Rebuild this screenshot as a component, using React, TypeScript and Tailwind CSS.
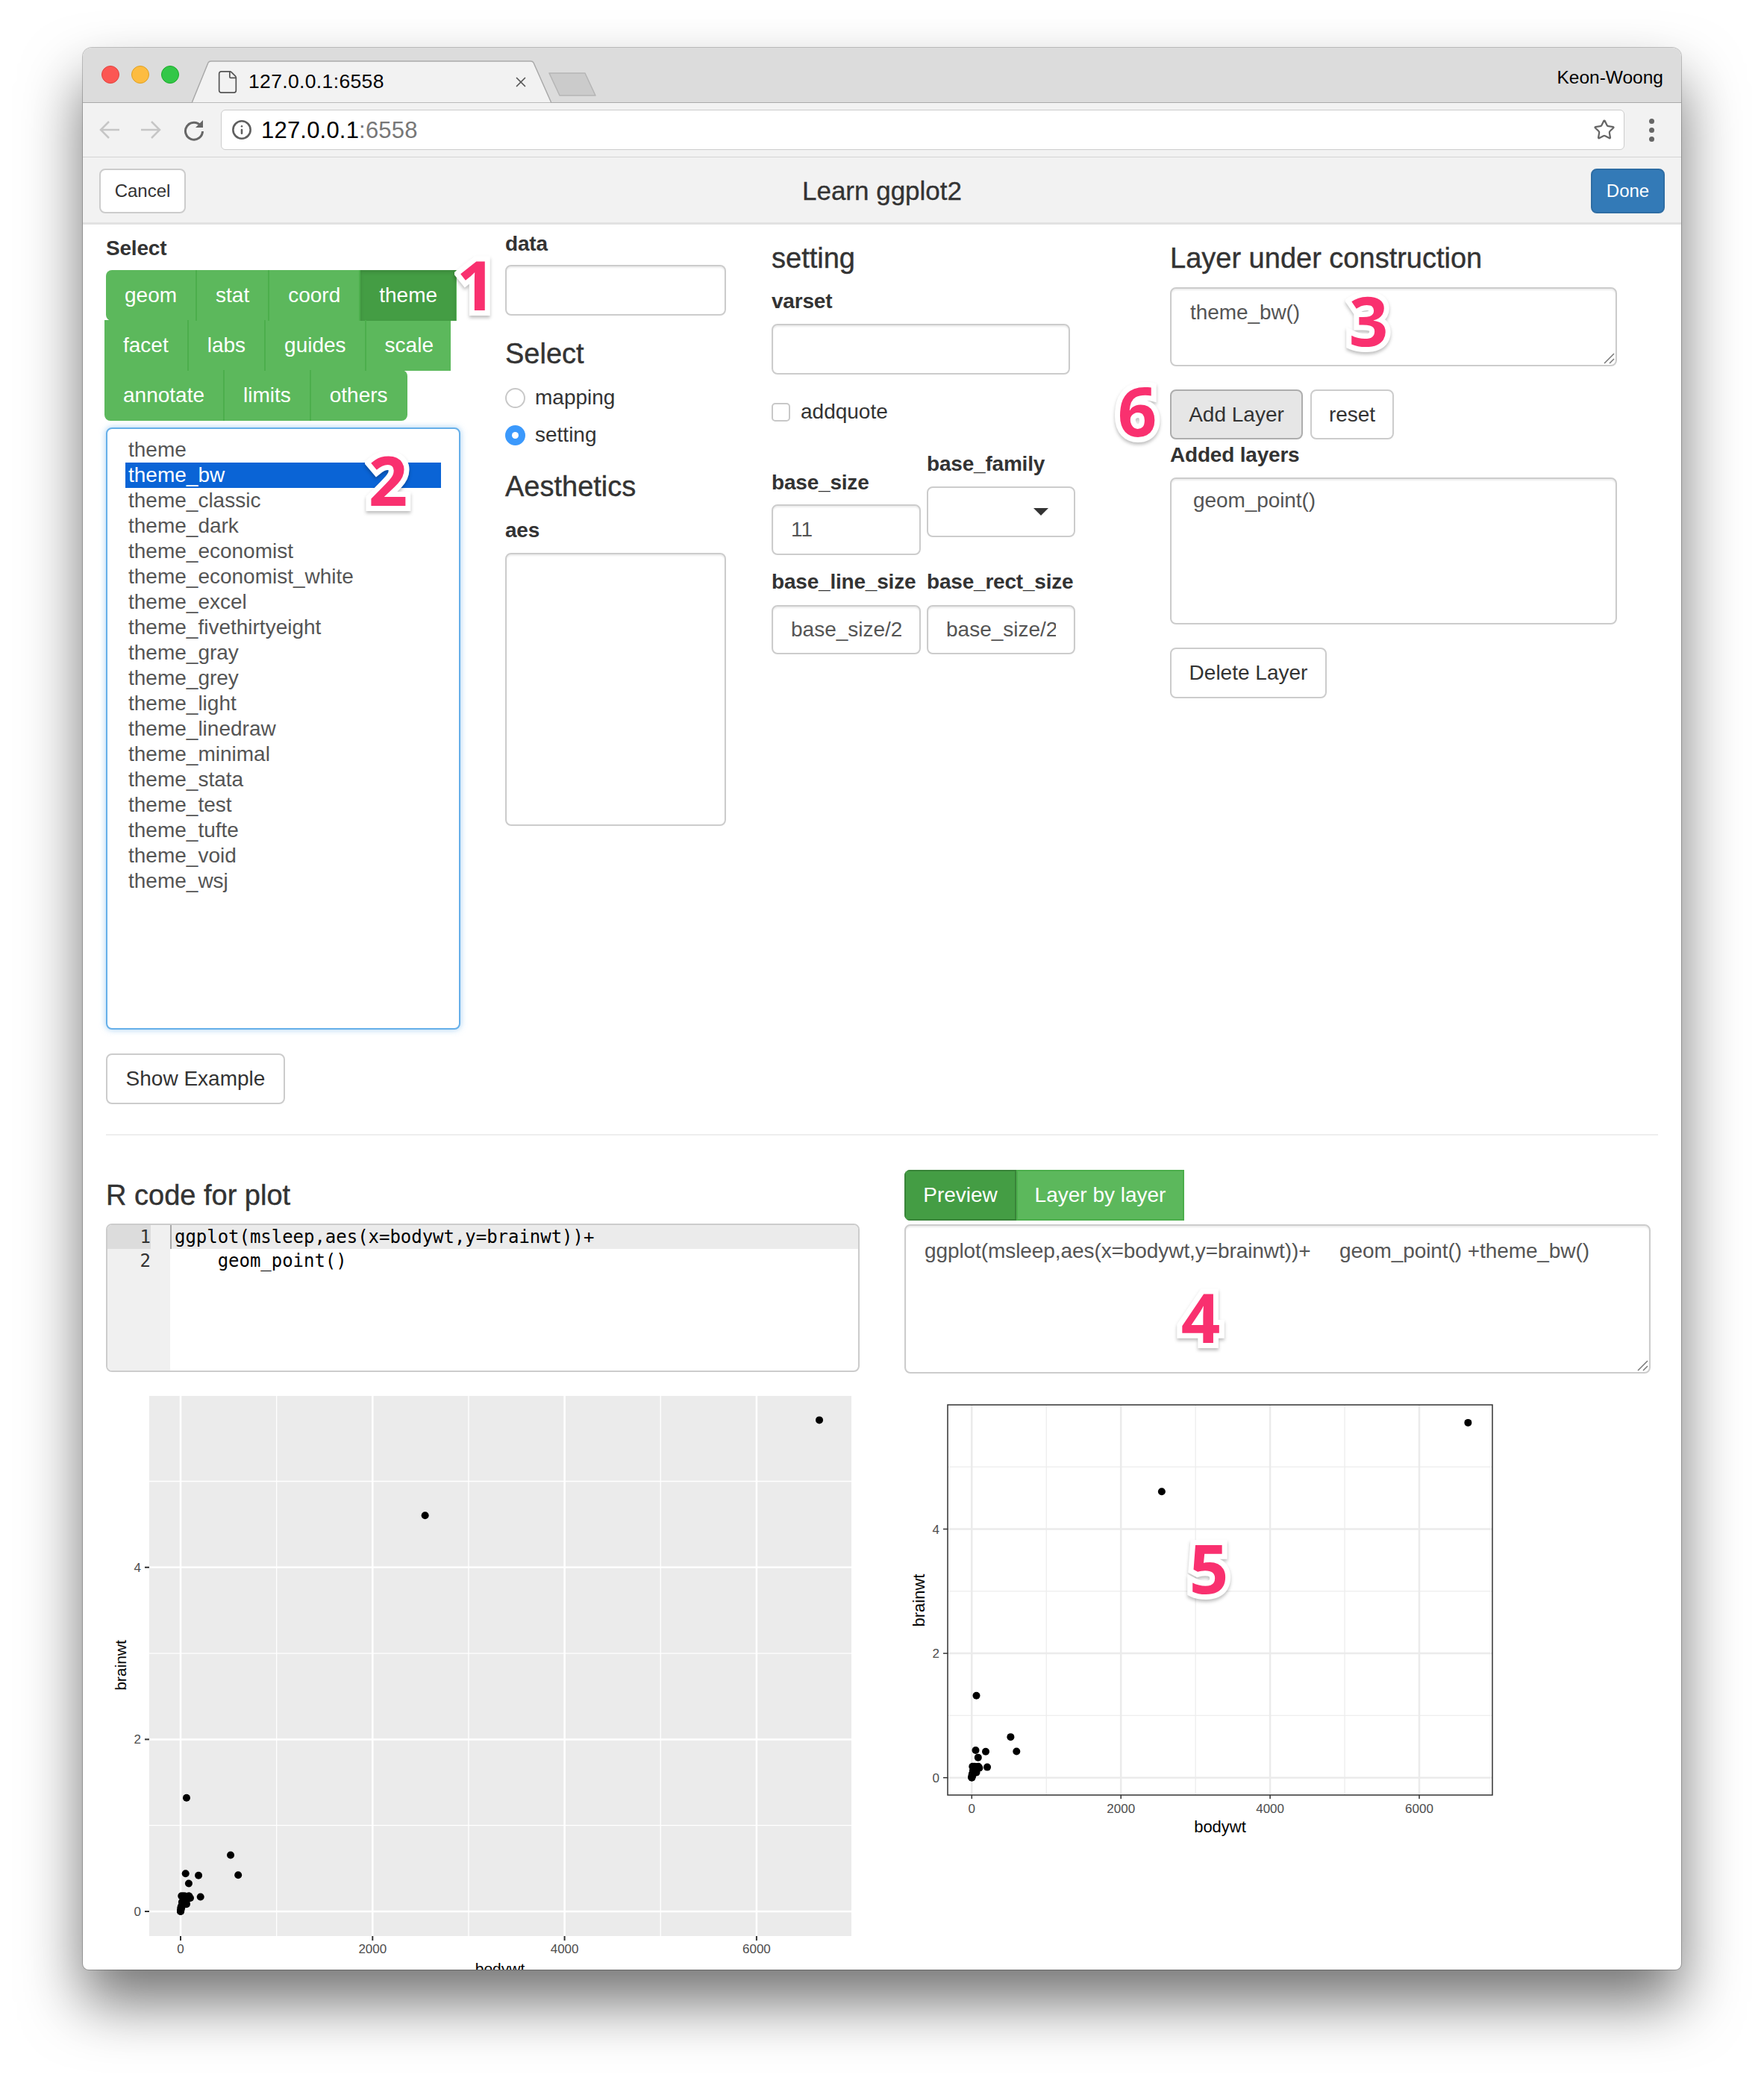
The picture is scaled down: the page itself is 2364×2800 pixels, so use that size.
import { File, Info, Star, X } from 'lucide-react';

const list = [
  'theme', 'theme_bw', 'theme_classic', 'theme_dark', 'theme_economist', 'theme_economist_white',
  'theme_excel', 'theme_fivethirtyeight', 'theme_gray', 'theme_grey', 'theme_light', 'theme_linedraw',
  'theme_minimal', 'theme_stata', 'theme_test', 'theme_tufte', 'theme_void', 'theme_wsj',
];

// msleep bodywt / brainwt
const points: [number, number][] = [
  [6654, 5.712], [2547, 4.603], [521, 0.655], [600, 0.423], [62, 1.32], [52.2, 0.44], [187, 0.419],
  [85, 0.325], [207.5, 0.169], [88, 0.179], [101, 0.156], [55.5, 0.175], [27.66, 0.115],
  [36, 0.179], [10, 0.179], [15.5, 0.11], [62, 0.084], [23, 0.075], [10, 0.046], [14, 0.07], [36.3, 0.119],
  [33.5, 0.115], [60, 0.12], [3.5, 0.0456], [4.75, 0.0394], [20.5, 0.1], [1, 0.0055], [0.5, 0.003], [0.1, 0.001],
  [2, 0.012], [5, 0.03], [8, 0.06], [45, 0.14],
];

const inputCls =
  'block rounded-lg border-2 border-[#ccc] bg-white px-[24px] text-[28px] text-[#555] shadow-[inset_0_2px_2px_rgba(0,0,0,0.075)] outline-none';
const btnCls = 'flex items-center justify-center rounded-lg border-2 text-[28px] text-[#333]';
const labelCls = 'h-[34px] text-[28px] font-bold leading-[34px] tracking-[-0.2px] text-[#333]';
const headCls = 'h-[44px] text-[38px] leading-[44px] text-[#333] [-webkit-text-stroke:0.4px_#333]';

function GreenRow({ items, className }: { items: string[]; className: string }) {
  return (
    <div className={`flex h-[68px] overflow-hidden bg-[#5cb85c] ${className}`}>
      {items.map((t) => (
        <div
          key={t}
          className={`flex items-center border-r-2 border-[#4cae4c] px-[25px] text-[28px] text-white last:border-r-0 ${
            t === 'theme' ? 'bg-[#449d44] shadow-[inset_0_3px_5px_rgba(0,0,0,0.125)]' : ''
          }`}
        >
          {t}
        </div>
      ))}
    </div>
  );
}

function Area({ text, grip, className }: { text?: string; grip?: boolean; className: string }) {
  return (
    <div className={`relative ${className}`}>
      <textarea
        readOnly
        defaultValue={text}
        className="block h-full w-full resize-none overflow-hidden rounded-lg border-2 border-[#ccc] bg-white px-[26px] py-[10px] text-[28px] leading-[40px] tracking-[-0.08px] text-[#555] shadow-[inset_0_2px_2px_rgba(0,0,0,0.075)] outline-none"
      />
      {grip && (
        <svg className="absolute right-[3px] bottom-[3px] h-[16px] w-[16px]" viewBox="0 0 16 16">
          <path d="M2 15L15 2M9 15L15 9" stroke="#777" strokeWidth="1.5" />
        </svg>
      )}
    </div>
  );
}

function Marker({ n, className }: { n: string; className: string }) {
  return (
    <span
      className={`absolute -translate-x-1/2 -translate-y-1/2 font-['Open_Sans',sans-serif] text-[92px] leading-none font-bold text-[#f9306f] drop-shadow-[0_3px_2px_rgba(0,0,0,0.25)] [-webkit-text-stroke:14px_white] [paint-order:stroke_fill] ${className}`}
    >
      {n}
    </span>
  );
}

function LeftPlot() {
  const px = (x: number) => 242 + x * 0.12865;
  const py = (y: number) => 2562 - y * 115.3;
  return (
    <svg className="mt-[21px] block h-[790px] w-[1010px]" viewBox="142 1860 1010 790" fontFamily="Liberation Sans, Arial, sans-serif">
      <rect x="200" y="1871" width="941" height="724" fill="#ebebeb" />
      {[1000, 3000, 5000].map((v) => (
        <line key={v} x1={px(v)} x2={px(v)} y1="1871" y2="2595" stroke="#fff" strokeWidth="1.3" />
      ))}
      {[1, 3, 5].map((v) => (
        <line key={v} y1={py(v)} y2={py(v)} x1="200" x2="1141" stroke="#fff" strokeWidth="1.3" />
      ))}
      {[0, 2000, 4000, 6000].map((v) => (
        <g key={v}>
          <line x1={px(v)} x2={px(v)} y1="1871" y2="2595" stroke="#fff" strokeWidth="2.5" />
          <line x1={px(v)} x2={px(v)} y1="2595" y2="2601" stroke="#333" strokeWidth="2" />
          <text x={px(v)} y="2618" textAnchor="middle" fontSize="17" fill="#4d4d4d">{v}</text>
        </g>
      ))}
      {[0, 2, 4].map((v) => (
        <g key={v}>
          <line y1={py(v)} y2={py(v)} x1="200" x2="1141" stroke="#fff" strokeWidth="2.5" />
          <line y1={py(v)} y2={py(v)} x1="194" x2="200" stroke="#333" strokeWidth="2" />
          <text x="189" y={py(v) + 6} textAnchor="end" fontSize="17" fill="#4d4d4d">{v}</text>
        </g>
      ))}
      {points.map(([x, y], i) => (
        <circle key={i} cx={px(x)} cy={py(y)} r="5" fill="#000" />
      ))}
      <text x="670" y="2646" textAnchor="middle" fontSize="21" fill="#000">bodywt</text>
      <text transform="translate(169 2232) rotate(-90)" textAnchor="middle" fontSize="21" fill="#000">brainwt</text>
    </svg>
  );
}

function RightPlot() {
  const px = (x: number) => 1302.3 + x * 0.09995;
  const py = (y: number) => 2382.7 - y * 83.3;
  return (
    <svg className="mt-[19px] block h-[620px] w-[1000px]" viewBox="1212 1860 1000 620" fontFamily="Liberation Sans, Arial, sans-serif">
      <rect x="1270" y="1883" width="730" height="523" fill="#fff" />
      {[1000, 3000, 5000].map((v) => (
        <line key={v} x1={px(v)} x2={px(v)} y1="1883" y2="2406" stroke="#ededed" strokeWidth="1.3" />
      ))}
      {[1, 3, 5].map((v) => (
        <line key={v} y1={py(v)} y2={py(v)} x1="1270" x2="2000" stroke="#ededed" strokeWidth="1.3" />
      ))}
      {[0, 2000, 4000, 6000].map((v) => (
        <g key={v}>
          <line x1={px(v)} x2={px(v)} y1="1883" y2="2406" stroke="#ebebeb" strokeWidth="2.5" />
          <line x1={px(v)} x2={px(v)} y1="2406" y2="2411" stroke="#333" strokeWidth="1.5" />
          <text x={px(v)} y="2430" textAnchor="middle" fontSize="17" fill="#4d4d4d">{v}</text>
        </g>
      ))}
      {[0, 2, 4].map((v) => (
        <g key={v}>
          <line y1={py(v)} y2={py(v)} x1="1270" x2="2000" stroke="#ebebeb" strokeWidth="2.5" />
          <line y1={py(v)} y2={py(v)} x1="1264" x2="1270" stroke="#333" strokeWidth="1.5" />
          <text x="1259" y={py(v) + 6} textAnchor="end" fontSize="17" fill="#4d4d4d">{v}</text>
        </g>
      ))}
      <rect x="1270" y="1883" width="730" height="523" fill="none" stroke="#333" strokeWidth="1.5" />
      {points.map(([x, y], i) => (
        <circle key={i} cx={px(x)} cy={py(y)} r="5" fill="#000" />
      ))}
      <text x="1635" y="2456" textAnchor="middle" fontSize="22" fill="#000">bodywt</text>
      <text transform="translate(1239 2145) rotate(-90)" textAnchor="middle" fontSize="22" fill="#000">brainwt</text>
    </svg>
  );
}

export default function App() {
  return (
    <div className="h-[2800px] w-[2364px] overflow-hidden bg-white pt-[64px] pl-[111px] font-['Liberation_Sans',Arial,sans-serif]">
      <div className="relative h-[2576px] w-[2142px] overflow-hidden rounded-t-[12px] rounded-b-[8px] bg-white shadow-[0_0_0_1px_rgba(0,0,0,0.22),0_44px_80px_rgba(0,0,0,0.55)]">
        {/* tab strip */}
        <div className="flex h-[74px] border-b border-[#a9a9a9] bg-[#dcdcdc] pl-[25px]">
          <div className="flex items-center gap-[16px] pb-[2px]">
            <span className="h-[24px] w-[24px] rounded-full border border-[#e0443e] bg-[#fc5753]" />
            <span className="h-[24px] w-[24px] rounded-full border border-[#dea123] bg-[#fdbc40]" />
            <span className="h-[24px] w-[24px] rounded-full border border-[#1aab29] bg-[#33c748]" />
          </div>
          <div className="relative mt-[17px] ml-[17px] flex h-[57px] w-[482px] items-center">
            <svg className="absolute inset-0 h-full w-full" viewBox="0 0 482 57">
              <path d="M0 57 L22 3 Q23 1 26 1 L454 1 Q457 1 458 3 L482 57 Z" fill="#f2f2f2" stroke="#a9a9a9" strokeWidth="1.5" />
            </svg>
            <File className="relative ml-[31px] h-[34px] w-[34px] text-[#555]" strokeWidth={1.2} />
            <span className="relative ml-[11px] w-[182px] text-[26.5px] tracking-[0.35px] whitespace-nowrap text-black">127.0.0.1:6558</span>
            <X className="relative ml-[172px] h-[22px] w-[22px] text-[#555]" strokeWidth={1.8} />
          </div>
          <svg className="mt-[33px] -ml-[5px] h-[32px] w-[66px]" viewBox="0 0 66 32">
            <path d="M2 1 H50 L64 31 H16 Z" fill="#cbcbcb" stroke="#b5b5b5" strokeWidth="1.5" strokeLinejoin="round" />
          </svg>
          <span className="mt-[26px] ml-auto mr-[24px] text-[24.5px] leading-[28px] text-black">Keon-Woong</span>
        </div>

        {/* address bar */}
        <div className="flex h-[73px] items-center border-b border-[#d4d4d4] bg-[#f2f2f2] pl-[22px]">
          <svg className="h-[28px] w-[28px]" viewBox="0 0 28 28" fill="none" stroke="#c6c6c6" strokeWidth="2.5">
            <path d="M27 14H3M13 3L2 14l11 11" />
          </svg>
          <svg className="ml-[27px] h-[28px] w-[28px]" viewBox="0 0 28 28" fill="none" stroke="#c6c6c6" strokeWidth="2.5">
            <path d="M1 14h24M15 3l11 11-11 11" />
          </svg>
          <svg className="ml-[29px] h-[30px] w-[30px]" viewBox="0 0 30 30" fill="none">
            <path d="M24 9.5A11.5 11.5 0 1 0 26.5 17" stroke="#666" strokeWidth="3" />
            <path d="M27 2v10H17z" fill="#666" />
          </svg>
          <div className="ml-[21px] flex h-[54px] w-[1881px] items-center rounded-md border border-[#ccc] bg-white pl-[13px]">
            <Info className="h-[28px] w-[28px] text-[#5f5f5f]" strokeWidth={2.2} />
            <span className="mt-[2px] ml-[12px] text-[31px] tracking-[0.2px] text-black">
              127.0.0.1<span className="text-[#777]">:6558</span>
            </span>
            <Star className="mr-[11px] ml-auto h-[30px] w-[30px] text-[#666]" strokeWidth={1.8} />
          </div>
          <div className="ml-[33px] flex flex-col gap-[5px]">
            <span className="h-[7px] w-[7px] rounded-full bg-[#666]" />
            <span className="h-[7px] w-[7px] rounded-full bg-[#666]" />
            <span className="h-[7px] w-[7px] rounded-full bg-[#666]" />
          </div>
        </div>

        {/* gadget title bar */}
        <div className="grid h-[90px] grid-cols-[1fr_auto_1fr] items-center border-b-[3px] border-[#e2e2e2] bg-[#f2f2f2] px-[22px] pt-[3px]">
          <div className="flex h-[60px] w-[116px] items-center justify-center rounded-lg border-2 border-[#ccc] bg-white text-[24px] text-[#333]">Cancel</div>
          <div className="text-[35px] text-[#333] [-webkit-text-stroke:0.3px_#333]">Learn ggplot2</div>
          <div className="flex h-[60px] w-[99px] items-center justify-center justify-self-end rounded-lg border-2 border-[#2e6da4] bg-[#337ab7] text-[24px] text-white">
            Done
          </div>
        </div>

        {/* controls */}
        <div className="flex pl-[31px]">
          <div className="w-[535px] pt-[15px]">
            <div className={labelCls}>Select</div>
            <GreenRow items={['geom', 'stat', 'coord', 'theme']} className="mt-[12px] w-[470px] rounded-tl-lg rounded-bl-lg" />
            <GreenRow items={['facet', 'labs', 'guides', 'scale']} className="-ml-[2px] -mt-[1px] w-[464px]" />
            <GreenRow items={['annotate', 'limits', 'others']} className="-ml-[2px] -mt-[1px] w-[406px] rounded-r-lg rounded-bl-lg" />
            <div className="mt-[9px] h-[807px] w-[475px] rounded-lg border-2 border-[#66afe9] bg-white px-[24px] pt-[11px] shadow-[0_0_8px_rgba(102,175,233,0.6)]">
              {list.map((t) => (
                <div
                  key={t}
                  className={`h-[34px] pl-[4px] text-[28px] leading-[34px] ${
                    t === 'theme_bw' ? 'bg-[#0a64d6] text-white' : 'text-[#555]'
                  }`}
                >
                  {t}
                </div>
              ))}
            </div>
            <div className={`${btnCls} mt-[32px] h-[68px] w-[240px] border-[#ccc] bg-white`}>Show Example</div>
          </div>

          <div className="w-[357px] pt-[9px]">
            <div className={labelCls}>data</div>
            <input readOnly className={`${inputCls} mt-[11px] h-[68px] w-[296px]`} />
            <div className={`${headCls} mt-[29px]`}>Select</div>
            <div className="mt-[20px] flex h-[34px] items-center text-[28px] text-[#333]">
              <span className="h-[27px] w-[27px] rounded-full border-2 border-[#c8c8c8] bg-white" />
              <span className="ml-[13px]">mapping</span>
            </div>
            <div className="mt-[16px] flex h-[34px] items-center text-[28px] text-[#333]">
              <span className="flex h-[27px] w-[27px] items-center justify-center rounded-full bg-[#3b99fc]">
                <span className="h-[9px] w-[9px] rounded-full bg-white" />
              </span>
              <span className="ml-[13px]">setting</span>
            </div>
            <div className={`${headCls} mt-[30px]`}>Aesthetics</div>
            <div className={`${labelCls} mt-[20px]`}>aes</div>
            <Area className="mt-[13px] h-[366px] w-[296px]" />
          </div>

          <div className="w-[534px] pt-[23px]">
            <div className={headCls}>setting</div>
            <div className={`${labelCls} mt-[19px]`}>varset</div>
            <input readOnly className={`${inputCls} mt-[13px] h-[68px] w-[400px]`} />
            <div className="mt-[33px] flex h-[34px] items-center text-[28px] text-[#333]">
              <span className="h-[25px] w-[25px] rounded-[5px] border-2 border-[#c8c8c8] bg-white" />
              <span className="ml-[14px]">addquote</span>
            </div>
            <div className="flex gap-[8px]">
              <div className="w-[200px]">
                <div className={`${labelCls} mt-[61px]`}>base_size</div>
                <input readOnly defaultValue="11" className={`${inputCls} mt-[12px] h-[68px] w-[200px]`} />
                <div className={`${labelCls} mt-[19px] whitespace-nowrap`}>base_line_size</div>
                <input readOnly defaultValue="base_size/2" className={`${inputCls} mt-[14px] h-[66px] w-[200px]`} />
              </div>
              <div className="w-[199px]">
                <div className={`${labelCls} mt-[36px]`}>base_family</div>
                <div className="mt-[13px] flex h-[68px] w-[199px] items-center justify-end rounded-lg border-2 border-[#ccc] bg-white pr-[34px]">
                  <svg className="h-[10px] w-[20px]" viewBox="0 0 20 10">
                    <path d="M0 0h20L10 10z" fill="#333" />
                  </svg>
                </div>
                <div className={`${labelCls} mt-[43px] whitespace-nowrap`}>base_rect_size</div>
                <input readOnly defaultValue="base_size/2" className={`${inputCls} mt-[14px] h-[66px] w-[199px]`} />
              </div>
            </div>
          </div>

          <div className="pt-[23px]">
            <div className={headCls}>Layer under construction</div>
            <Area grip text="theme_bw()" className="mt-[17px] h-[106px] w-[599px] [&>textarea]:pt-[12px] [&>textarea]:pl-[25px]" />
            <div className="mt-[31px] flex gap-[10px]">
              <div className={`${btnCls} h-[67px] w-[178px] border-[#adadad] bg-[#e6e6e6]`}>Add Layer</div>
              <div className={`${btnCls} h-[67px] w-[112px] border-[#ccc] bg-white`}>reset</div>
            </div>
            <div className={`${labelCls} mt-[4px]`}>Added layers</div>
            <Area text="geom_point()" className="mt-[13px] h-[197px] w-[599px] [&>textarea]:pt-[9px] [&>textarea]:pl-[29px]" />
            <div className={`${btnCls} mt-[31px] h-[68px] w-[210px] border-[#ccc] bg-white`}>Delete Layer</div>
          </div>
        </div>

        <div className="mt-[40px] mr-[31px] ml-[31px] h-[2px] bg-[#eee]" />

        {/* bottom half */}
        <div className="flex pl-[31px]">
          <div className="w-[1070px]">
            <div className={`${headCls} mt-[58px]`}>R code for plot</div>
            <div className="mt-[16px] flex h-[199px] w-[1010px] overflow-hidden rounded-lg border-2 border-[#ccc] bg-white font-['DejaVu_Sans_Mono',monospace] text-[24px] leading-[32px] tracking-[-0.03px] text-black">
              <div className="w-[84px] bg-[#f0f0f0] pr-[26px] text-right text-[#333]">
                <div className="bg-[#dcdcdc]">1</div>
                <div>2</div>
              </div>
              <div className="flex-1 whitespace-pre">
                <div className="border-l-2 border-l-[#aaa] bg-[#ebebeb] pl-[4px]">ggplot(msleep,aes(x=bodywt,y=brainwt))+</div>
                <div className="pl-[6px]">{'    geom_point()'}</div>
              </div>
            </div>
            <LeftPlot />
          </div>
          <div>
            <div className="mt-[46px] flex h-[68px] overflow-hidden rounded-lg text-[28px] text-white">
              <div className="flex w-[150px] items-center justify-center border-2 border-[#398439] bg-[#449d44]">Preview</div>
              <div className="flex w-[225px] items-center justify-center border-2 border-[#4cae4c] bg-[#5cb85c]">Layer by layer</div>
            </div>
            <Area grip text="ggplot(msleep,aes(x=bodywt,y=brainwt))+     geom_point() +theme_bw()" className="mt-[5px] h-[200px] w-[1000px] [&>textarea]:pt-[14px] [&>textarea]:pl-[25px]" />
            <RightPlot />
          </div>
        </div>

        <Marker n="1" className="left-[527px] top-[317px]" />
        <Marker n="2" className="left-[409px] top-[579px]" />
        <Marker n="3" className="left-[1723px] top-[365px]" />
        <Marker n="4" className="left-[1498px] top-[1701px]" />
        <Marker n="5" className="left-[1509px] top-[2037px]" />
        <Marker n="6" className="left-[1413px] top-[486px]" />
      </div>
    </div>
  );
}
